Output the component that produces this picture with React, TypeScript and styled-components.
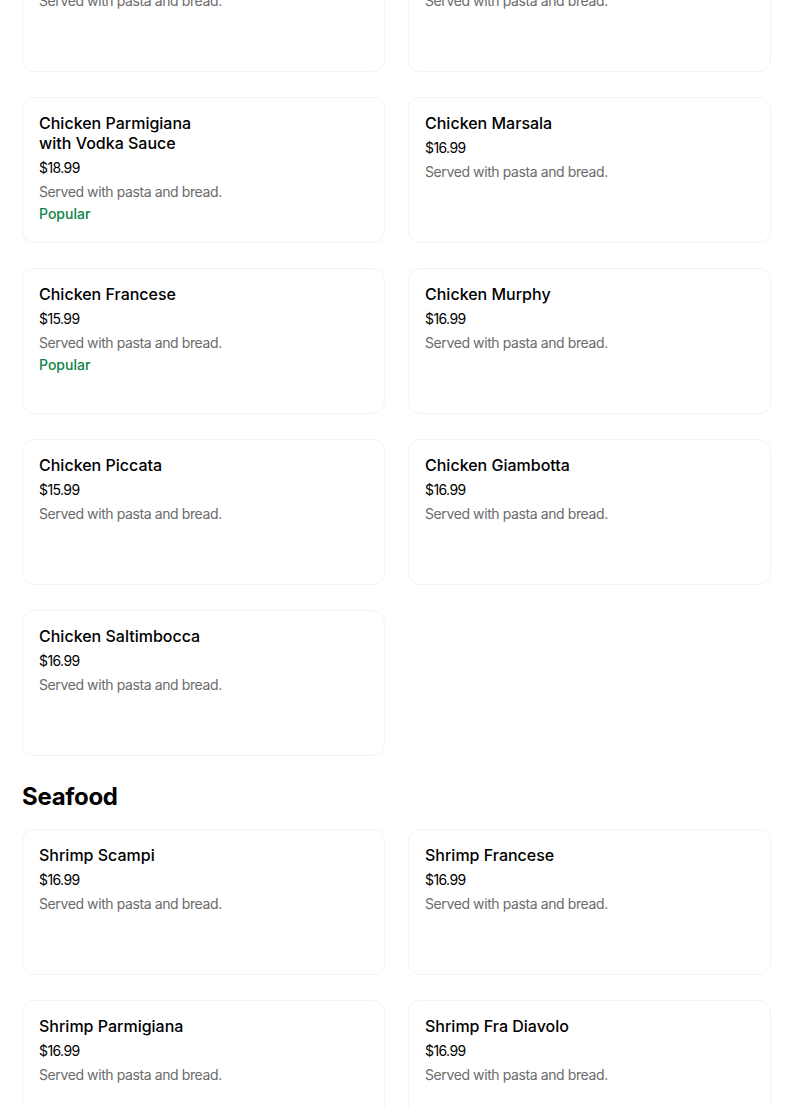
import styled, { createGlobalStyle } from 'styled-components';

const GlobalStyle = createGlobalStyle`
  body {
    margin: 0;
    background: #ffffff;
    font-family: Inter, "Noto Sans", sans-serif;
    color: #000000;
    overflow: hidden;
  }
`;

// the list is scrolled: the top row of chicken dishes is partly out of view
const Page = styled.div`
  width: 749px;
  padding-left: 22px;
  margin-top: -74px;
`;

const Section = styled.section`
  display: flex;
  flex-direction: column;
`;

const SectionTitle = styled.h2`
  margin: 25px 0 16px;
  font-size: 24px;
  line-height: 32px;
  font-weight: 700;
  letter-spacing: -0.3px;
`;

const Grid = styled.div`
  display: grid;
  grid-template-columns: 1fr 1fr;
  column-gap: 23px;
  row-gap: 25px;
`;

const Card = styled.div`
  box-sizing: border-box;
  height: 146px;
  padding: 15px 16px;
  border: 1px solid #f3f3f3;
  border-radius: 12px;
  background: #ffffff;
  display: flex;
  flex-direction: column;
`;

const ItemName = styled.div`
  font-size: 16px;
  line-height: 20px;
  font-weight: 500;
  max-width: 170px;
`;

const Price = styled.div`
  margin-top: 5px;
  font-size: 14px;
  line-height: 20px;
  letter-spacing: -0.6px;
  color: #000000;
`;

const Description = styled.div`
  margin-top: 4px;
  font-size: 14px;
  line-height: 20px;
  letter-spacing: -0.4px;
  color: #6b6b6b;
`;

const Badge = styled.div`
  margin-top: 2px;
  font-size: 14px;
  line-height: 20px;
  font-weight: 500;
  color: #0e8345;
`;

interface Item {
  name: string;
  price: string;
  popular?: boolean;
}

const chicken: Item[] = [
  { name: 'Chicken Parmigiana', price: '$15.99' },
  { name: 'Chicken Cacciatore', price: '$16.99' },
  { name: 'Chicken Parmigiana with Vodka Sauce', price: '$18.99', popular: true },
  { name: 'Chicken Marsala', price: '$16.99' },
  { name: 'Chicken Francese', price: '$15.99', popular: true },
  { name: 'Chicken Murphy', price: '$16.99' },
  { name: 'Chicken Piccata', price: '$15.99' },
  { name: 'Chicken Giambotta', price: '$16.99' },
  { name: 'Chicken Saltimbocca', price: '$16.99' },
];

const seafood: Item[] = [
  { name: 'Shrimp Scampi', price: '$16.99' },
  { name: 'Shrimp Francese', price: '$16.99' },
  { name: 'Shrimp Parmigiana', price: '$16.99' },
  { name: 'Shrimp Fra Diavolo', price: '$16.99' },
];

function MenuCard({ item }: { item: Item }) {
  return (
    <Card>
      <ItemName>{item.name}</ItemName>
      <Price>{item.price}</Price>
      <Description>Served with pasta and bread.</Description>
      {item.popular && <Badge>Popular</Badge>}
    </Card>
  );
}

export default function App() {
  return (
    <>
      <GlobalStyle />
      <Page>
        <Section>
          <Grid>
            {chicken.map((item) => (
              <MenuCard key={item.name} item={item} />
            ))}
          </Grid>
        </Section>
        <Section>
          <SectionTitle>Seafood</SectionTitle>
          <Grid>
            {seafood.map((item) => (
              <MenuCard key={item.name} item={item} />
            ))}
          </Grid>
        </Section>
      </Page>
    </>
  );
}
